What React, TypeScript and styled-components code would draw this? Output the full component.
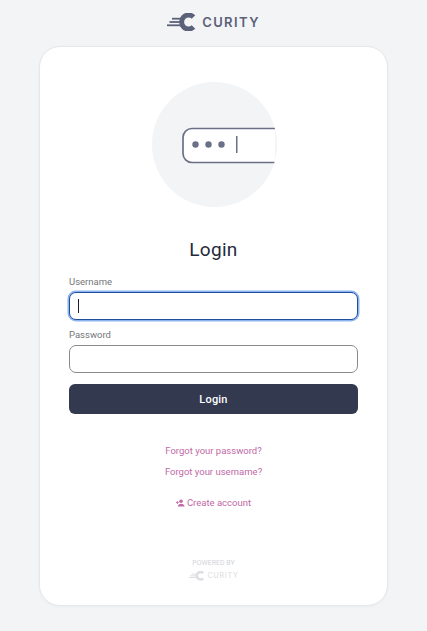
import { createGlobalStyle, styled } from 'styled-components';

const GlobalStyle = createGlobalStyle`
  html, body {
    margin: 0;
    padding: 0;
    background: #f3f4f6;
    font-family: Roboto, "Liberation Sans", sans-serif;
  }
`;

const LogoMark = ({ color, width }: { color: string; width: number }) => (
  <svg width={width} height={(width * 18) / 30} viewBox="0 0 30 18" aria-hidden="true">
    <path d="M26.5 4A7 7 0 1 0 26.5 14" fill="none" stroke={color} strokeWidth="5" />
    <rect x="5" y="4.8" width="9" height="1.8" fill={color} />
    <rect x="2.5" y="8.1" width="11" height="1.8" fill={color} />
    <rect x="0" y="11.4" width="14" height="1.8" fill={color} />
  </svg>
);

const KeyIllustration = () => (
  <svg width="125" height="125" viewBox="0 0 125 125" aria-hidden="true">
    <path
      d="M123 46.5H40a9 9 0 0 0-9 9v16a9 9 0 0 0 9 9h83"
      fill="#fff"
      stroke="#6a7087"
      strokeWidth="1.7"
    />
    <circle cx="43.5" cy="62.5" r="3.2" fill="#6a7087" />
    <circle cx="56.5" cy="62.5" r="3.2" fill="#6a7087" />
    <circle cx="69.5" cy="62.5" r="3.2" fill="#6a7087" />
    <rect x="84" y="54" width="1.5" height="17" fill="#6a7087" />
  </svg>
);

const UserPlusIcon = () => (
  <svg width="9" height="8" viewBox="0 0 10 8" aria-hidden="true">
    <circle cx="5.6" cy="2" r="2" fill="#c06aa6" />
    <path d="M2 8c0-2 1.6-3.2 3.6-3.2S9.6 6 9.6 8z" fill="#c06aa6" />
    <rect x="0" y="3" width="3" height="1" fill="#c06aa6" />
    <rect x="1" y="2" width="1" height="3" fill="#c06aa6" />
  </svg>
);

export default function App() {
  return (
    <Page>
      <GlobalStyle />
      <Header>
        <LogoMark color="#5b6178" width={30} />
        <Wordmark>CURITY</Wordmark>
      </Header>
      <Card>
        <IllustrationCircle>
          <KeyIllustration />
        </IllustrationCircle>
        <Title>Login</Title>
        <Form onSubmit={(e) => e.preventDefault()}>
          <Label htmlFor="username">Username</Label>
          <Field>
            <Input id="username" type="text" $focused />
            <Caret />
          </Field>
          <Label htmlFor="password">Password</Label>
          <Input id="password" type="password" />
          <SubmitButton type="submit">Login</SubmitButton>
        </Form>
        <Links>
          <LinkItem href="#">Forgot your password?</LinkItem>
          <LinkItem href="#">Forgot your username?</LinkItem>
          <CreateLink href="#">
            <UserPlusIcon />
            Create account
          </CreateLink>
        </Links>
        <PoweredBy>
          <PoweredLabel>POWERED BY</PoweredLabel>
          <PoweredLogo>
            <LogoMark color="#dcdee2" width={16} />
            <PoweredName>CURITY</PoweredName>
          </PoweredLogo>
        </PoweredBy>
      </Card>
    </Page>
  );
}

const Page = styled.div`
  width: 427px;
  height: 631px;
  overflow: hidden;
  box-sizing: border-box;
  padding-left: 39px;
  display: flex;
  flex-direction: column;
`;

const Header = styled.header`
  width: 349px;
  height: 46px;
  flex-shrink: 0;
  box-sizing: border-box;
  padding-bottom: 2px;
  display: flex;
  align-items: center;
  justify-content: center;
  gap: 5px;
`;

const Wordmark = styled.span`
  font-family: Inter, "Liberation Sans", sans-serif;
  font-size: 13px;
  font-weight: 600;
  letter-spacing: 1.4px;
  color: #5b6178;
`;

const Card = styled.main`
  width: 349px;
  height: 560px;
  flex-shrink: 0;
  box-sizing: border-box;
  background: #fff;
  border: 1px solid #e6e7ea;
  border-radius: 21px;
  box-shadow: 0 1px 3px rgba(40, 50, 80, 0.04);
  padding: 35px 29px 0;
  display: flex;
  flex-direction: column;
  align-items: center;
`;

const IllustrationCircle = styled.div`
  width: 125px;
  height: 125px;
  border-radius: 50%;
  background: #f3f4f6;
  flex-shrink: 0;
  overflow: hidden;
  margin-left: 2px;
`;

const Title = styled.h1`
  margin: 31px 0 0;
  font-size: 19px;
  line-height: 24px;
  font-weight: 400;
  letter-spacing: 0.3px;
  color: #25293a;
`;

const Form = styled.form`
  width: 289px;
  margin-top: 13px;
  display: flex;
  flex-direction: column;
`;

const Label = styled.label`
  display: block;
  height: 15px;
  margin-bottom: 2px;
  font-size: 9.5px;
  line-height: 14px;
  color: #75767b;

  &[for='password'] {
    margin-top: 8px;
    margin-bottom: 2px;
  }
`;

const Field = styled.div`
  position: relative;
`;

const Input = styled.input<{ $focused?: boolean }>`
  display: block;
  width: 100%;
  height: 28px;
  box-sizing: border-box;
  padding: 0 8px;
  background: #fff;
  border-radius: 7px;
  outline: none;
  border: 1px solid ${(p) => (p.$focused ? '#1f4f9c' : '#8a8a8a')};
  box-shadow: ${(p) => (p.$focused ? '0 0 0 1.5px #8db4ee' : 'none')};
`;

const Caret = styled.span`
  position: absolute;
  left: 9px;
  top: 7px;
  width: 1px;
  height: 14px;
  background: #1d1f28;
`;

const SubmitButton = styled.button`
  height: 30px;
  margin-top: 11px;
  border: none;
  border-radius: 6px;
  background: #333a50;
  color: #fff;
  font-family: inherit;
  font-size: 11px;
  font-weight: 500;
  letter-spacing: 0.2px;
`;

const Links = styled.nav`
  margin-top: 26px;
  display: flex;
  flex-direction: column;
  align-items: center;
`;

const LinkItem = styled.a`
  height: 21px;
  font-size: 9.5px;
  line-height: 21px;
  color: #c06aa6;
  text-decoration: none;
`;

const CreateLink = styled(LinkItem)`
  margin-top: 10px;
  display: flex;
  align-items: center;
  gap: 2px;
`;

const PoweredBy = styled.footer`
  margin-top: 45px;
  display: flex;
  flex-direction: column;
  align-items: center;
  gap: 3px;
`;

const PoweredLabel = styled.span`
  font-size: 7px;
  line-height: 10px;
  color: #d2d4d8;
`;

const PoweredLogo = styled.div`
  display: flex;
  align-items: center;
  gap: 3px;
`;

const PoweredName = styled.span`
  font-family: Inter, "Liberation Sans", sans-serif;
  font-size: 7px;
  letter-spacing: 0.8px;
  color: #d8dade;
`;
